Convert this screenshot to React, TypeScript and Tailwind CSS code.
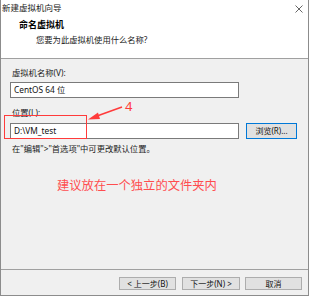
import React from 'react';

const font = { fontFamily: '"Noto Sans", "Noto Sans CJK SC", sans-serif' };

const WinButton: React.FC<{ label: string; focused?: boolean; className?: string }> = ({ label, focused, className }) => (
  <div
    className={`flex items-center justify-center h-[13px] bg-[#e1e1e1] text-[8px] text-[#111] border ${
      focused ? 'border-[#0078d7]' : 'border-[#adadad]'
    } ${className ?? ''}`}
  >
    {label}
  </div>
);

const App: React.FC = () => {
  return (
    <div style={font} className="relative w-[309px] h-[296px] bg-[#f0f0f0] border-l border-r border-b border-[#8c8c8c] flex flex-col overflow-hidden">
      {/* Header */}
      <div className="h-[59px] bg-white border-b border-[#a0a0a0] flex flex-col">
        <div className="h-[16px] flex items-center justify-between pl-[1px] pr-[5px]">
          <span className="text-[8.5px] leading-none text-[#222]">新建虚拟机向导</span>
          <svg width="8" height="8" viewBox="0 0 8 8" className="mt-[1px]">
            <path d="M0.5 0.5 L7.5 7.5 M7.5 0.5 L0.5 7.5" stroke="#555" strokeWidth="0.9" />
          </svg>
        </div>
        <div className="mt-[3px] pl-[18px] h-[12px] flex items-center text-[9px] font-bold text-black">命名虚拟机</div>
        <div className="mt-[3px] pl-[35px] h-[12px] flex items-center text-[8.3px] text-[#222]">您要为此虚拟机使用什么名称?</div>
      </div>

      {/* Body */}
      <div className="flex flex-col px-[9px] pt-[8px]">
        <div className="h-[12px] flex items-center pl-[2px] text-[8.3px] text-[#222]">虚拟机名称(V):</div>
        <div className="mt-[3px] w-[229px] h-[16px] bg-white border border-[#7a7a7a] flex items-center pl-[3px] text-[8.3px] text-[#111]">
          CentOS 64 位
        </div>
        <div className="mt-[9px] h-[12px] flex items-center pl-[2px] text-[8.3px] text-[#222]">位置(L):</div>
        <div className="mt-[4px] flex items-center gap-[7px]">
          <div className="w-[229px] h-[16px] bg-white border border-[#7a7a7a] flex items-center pl-[3px] text-[8.3px] text-[#111]">
            D:\VM_test
          </div>
          <WinButton label="浏览(R)..." focused className="w-[51px] h-[16px]" />
        </div>
        <div className="mt-[4px] h-[12px] flex items-center pl-[2px] text-[8.3px] text-[#222]">
          在"编辑"&gt;"首选项"中可更改默认位置。
        </div>
        <div className="mt-[24px] pl-[47px] h-[14px] flex items-center text-[12.3px] text-[#ff4d4f]">
          建议放在一个独立的文件夹内
        </div>
      </div>

      {/* Footer */}
      <div className="mt-auto border-t border-[#a0a0a0] h-[26px] flex items-start justify-end pt-[7px] pr-[6px]">
        <WinButton label="< 上一步(B)" className="w-[57px]" />
        <WinButton label="下一步(N) >" className="w-[58px] ml-[6px]" />
        <WinButton label="取消" className="w-[57px] ml-[5px]" />
      </div>

      {/* Annotations */}
      <div className="absolute left-[3px] top-[115px] w-[83px] h-[24px] border-[1.5px] border-[#ff3b3b]" />
      <svg className="absolute left-0 top-0 pointer-events-none" width="309" height="296">
        <path d="M121 107 L96 116" stroke="#ff3b3b" strokeWidth="1.6" />
        <path d="M87 119.5 L97 112.5 L99 119 Z" fill="#ff3b3b" />
      </svg>
      <span className="absolute left-[124px] top-[98px] text-[13px] leading-[16px] text-[#ff3b3b]">4</span>
    </div>
  );
};

export default App;
